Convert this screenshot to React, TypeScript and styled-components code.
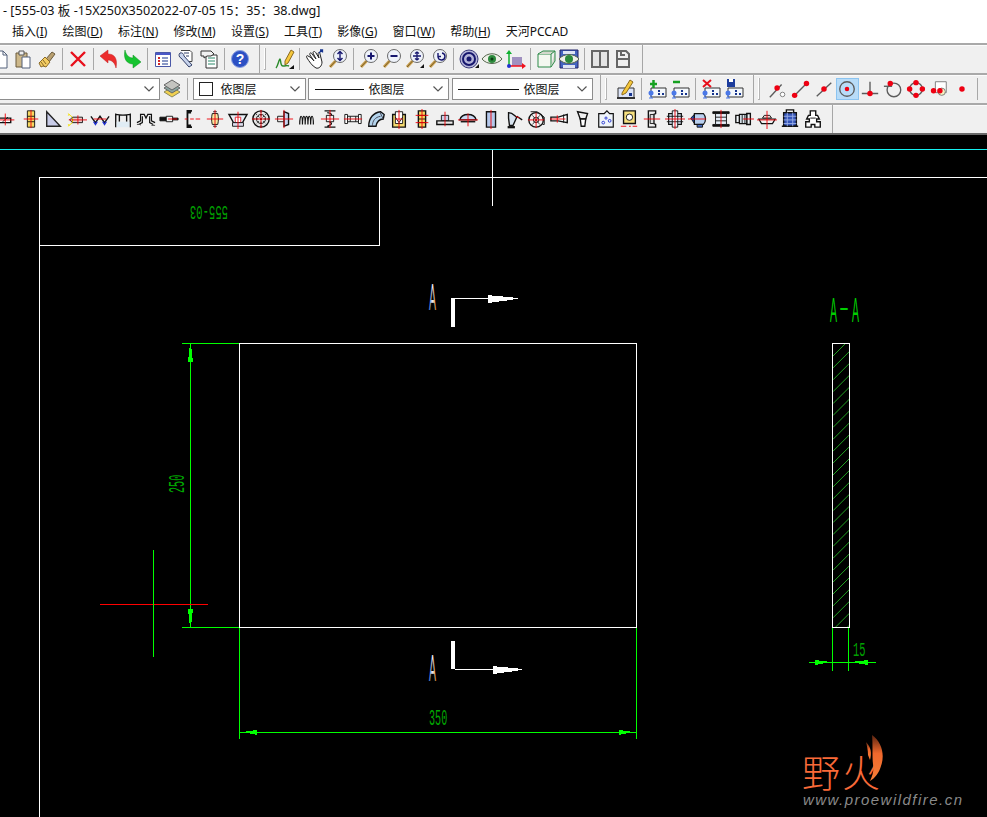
import React from "react";
import styled, { createGlobalStyle } from "styled-components";

const GlobalStyle = createGlobalStyle`
    html, body {
        margin: 0;
        padding: 0;
        width: 987px;
        height: 817px;
        overflow: hidden;
        background: #000;
        font-family: "Noto Sans", "Noto Sans CJK SC", sans-serif;
    }
`;

const Window = styled.div`
    width: 987px;
    height: 817px;
    display: flex;
    flex-direction: column;
    overflow: hidden;
`;

const TitleBar = styled.div`
    height: 22px;
    flex: none;
    background: #fff;
    color: #111;
    font-size: 12.6px;
    line-height: 22px;
    padding-left: 3px;
    white-space: nowrap;
`;

const MenuBar = styled.div`
    height: 21px;
    flex: none;
    background: #fff;
    display: flex;
    gap: 15.3px;
    padding-left: 12px;
    font-family: "Noto Sans", "Noto Sans CJK SC", sans-serif;
    font-size: 12px;
    line-height: 20px;
    color: #111;
    white-space: nowrap;
`;

const MenuKey = styled.span`
    text-decoration: underline;
`;

const ToolRow = styled.div`
    height: 30px;
    flex: none;
    box-sizing: border-box;
    background: #f0f0f0;
    border-top: 2px solid #a9a9a9;
    box-shadow: inset 0 1px 0 #fbfbfb;
    display: flex;
    align-items: center;
    overflow: hidden;
`;

const BottomEdge = styled.div`
    height: 2px;
    flex: none;
    background: #696969;
`;

const LeadSpace = styled.div<{ $offset: number }>`
    flex: none;
    margin-left: ${props => props.$offset}px;
`;

const ToolButton = styled.div<{ $active?: boolean }>`
    width: 23px;
    height: 22px;
    flex: none;
    box-sizing: border-box;
    display: flex;
    align-items: center;
    justify-content: center;
    background: ${props => props.$active ? "#b8dcf8" : "transparent"};
    outline: ${props => props.$active ? "1px solid #8cc4f0" : "none"};
    outline-offset: -1px;
`;

const SmallButton = styled(ToolButton)`
    svg {
        width: 20px;
        height: 20px;
    }
`;

const Separator = styled.div`
    width: 8px;
    height: 22px;
    flex: none;
    display: flex;
    justify-content: center;

    &::before {
        content: "";
        width: 1px;
        background: #a8a8a8;
    }
`;

const BandBreak = styled.div<{ $width: number; $grip?: boolean }>`
    width: ${props => props.$width}px;
    flex: none;
    align-self: stretch;
    box-sizing: border-box;
    padding-left: 7px;
    display: flex;
    align-items: center;
    gap: 4px;

    &::before {
        content: "";
        width: 1px;
        align-self: stretch;
        background: #a6a6a6;
    }

    &::after {
        content: "";
        display: ${props => props.$grip ? "block" : "none"};
        width: 1px;
        height: 21px;
        background: #fff;
        border-right: 1px solid #b4b4b4;
        border-bottom: 1px solid #b4b4b4;
    }
`;

const Combo = styled.div<{ $width: number; $gap?: number; $pad?: number }>`
    width: ${props => props.$width}px;
    height: 22px;
    flex: none;
    box-sizing: border-box;
    margin-left: ${props => props.$gap ?? 0}px;
    padding-left: ${props => props.$pad ?? 5}px;
    background: #fff;
    border: 1px solid #8d8d8d;
    display: flex;
    align-items: center;
    position: relative;
    font-size: 12px;
    color: #111;
    white-space: nowrap;
`;

const ComboArrow = styled.svg`
    position: absolute;
    right: 5px;
    top: 7px;
    width: 10px;
    height: 6px;
`;

const Swatch = styled.span`
    width: 14px;
    height: 14px;
    flex: none;
    box-sizing: border-box;
    background: #fff;
    border: 1px solid #222;
    margin-right: 8px;
`;

const LineSample = styled.span<{ $width: number }>`
    width: ${props => props.$width}px;
    height: 1px;
    flex: none;
    background: #111;
    margin-right: 5px;
`;

const Canvas = styled.svg`
    display: block;
    flex: none;
    width: 987px;
    height: 682px;
    background: #000;
`;

const CadText = styled.text<{ $tone?: string }>`
    font-family: "Liberation Mono", monospace;
    fill: ${props => props.$tone ?? "#00b400"};
`;

const LetterText = styled.text`
    font-family: "Liberation Sans", sans-serif;
`;

const BrandText = styled.text`
    font-family: "Noto Sans CJK SC", sans-serif;
    font-weight: 300;
    fill: #f96a38;
    font-size: 38px;
`;

const SiteText = styled.text`
    font-family: "Liberation Sans", sans-serif;
    font-style: italic;
    font-size: 15px;
    letter-spacing: 1.47px;
    fill: #8a8a8a;
`;

const Glyph = styled.svg`
    width: 22px;
    height: 22px;
    display: block;
    overflow: visible;
`;

function Ico({ children }: { children: React.ReactNode }) {
    return <Glyph viewBox="0 0 22 22" fill="none" stroke="#111" strokeWidth="1">{children}</Glyph>;
}

// red centre lines, used all over the part icons
const Red = ({ d }: { d: string }) => <path d={d} stroke="#f00008" strokeWidth="1" fill="none" />;
const Dot = ({ x, y, r = 3 }: { x: number; y: number; r?: number }) => <circle cx={x} cy={y} r={r} fill="#ee0012" stroke="none" />;
const Gray = ({ d }: { d: string }) => <path d={d} stroke="#5c5c5c" strokeWidth="1.5" fill="none" />;

function Lens({ mark, corner }: { mark: React.ReactNode; corner?: boolean }) {
    return (
        <Ico>
            <path d="M8.5 13 3 19" stroke="#caa050" strokeWidth="3" />
            <path d="M8.5 13 3 19" stroke="#7a6028" strokeWidth="1" />
            <circle cx="13" cy="8" r="6.5" fill="#eef2fa" stroke="#6a6a6a" />
            <g stroke="#16166e" strokeWidth="2">{mark}</g>
            {corner && <path d="M16 20h4v-4z" fill="#111" stroke="none" />}
        </Ico>
    );
}

function NodeBox({ top }: { top: React.ReactNode }) {
    return (
        <Ico>
            <path d="M5 10h15v9H5z" fill="#f4f8fc" stroke="#333" />
            <circle cx="5" cy="15" r="2.5" fill="#4a78e8" stroke="none" />
            <path d="M5 17v3M3 20h4" stroke="#4a78e8" />
            <path d="M12 15h2v2h-2zM16 15h2v2h-2zM12 12h2v2h-2z" fill="#16348e" stroke="none" />
            {top}
        </Ico>
    );
}

const topRow: Record<string, React.ReactNode> = {
    doc: <Ico><path d="M5 3h8l4 4v13H5z" fill="#fff" stroke="#52607a" /><path d="M13 3v4h4" stroke="#52607a" /></Ico>,
    paste: <Ico><path d="M3 5h11v14H3z" fill="#cdb88a" stroke="#6a5a3c" /><path d="M6 3h5v4H6z" fill="#eee" stroke="#555" /><path d="M9 9h8v11H9z" fill="#fff" stroke="#52607a" /></Ico>,
    brush: <Ico><path d="M10 11 16 4l3 2-6 8z" fill="#b9a070" stroke="#6a5a3c" /><path d="M3 15 9 9l5 5-4 5-3-1-2 1z" fill="#f3cc62" stroke="#8a6a28" /><path d="M7 12l3 4M5 14l3 4" stroke="#8a6a28" /></Ico>,
    cross: <Ico><path d="M4 4 18 18M18 4 4 18" stroke="#e8101c" strokeWidth="2.4" /></Ico>,
    undo: <Ico><path d="M2 8 10 2v4c6 0 10 4 8 14-1-5-4-8-8-8v3z" fill="#ec2c2c" stroke="#c02020" strokeWidth=".5" /></Ico>,
    redo: <Ico><path d="M20 14 12 20v-4C6 16 2 11 4 2c1 5 4 8 8 8V7z" fill="#16c430" stroke="#109020" strokeWidth=".5" /></Ico>,
    list: <Ico><path d="M3.5 4.5h15v14h-15z" fill="#fff" stroke="#4a58a8" /><path d="M4 5h14v2H4z" fill="#4a58c8" stroke="none" /><path d="M6 9h2v2H6zM6 12h2v2H6zM6 15h2v2H6z" fill="#d02828" stroke="none" /><path d="M10 10h6M10 13h6M10 16h6" stroke="#16348e" /></Ico>,
    wrench: <Ico><path d="M6 2.5h9l2 2v9h-4" stroke="#444" fill="#fff" /><path d="M5 5a3 3 0 0 0 1 5l8 9 3-2-8-9a3 3 0 0 0-4-3z" fill="#c8d4ec" stroke="#33406a" /><path d="M9 5h5M11 8h3" stroke="#33406a" /></Ico>,
    sheet: <Ico><path d="M8 7h11v13H8z" fill="#fff" stroke="#333" /><path d="M10 10h7M10 13h7M10 16h7" stroke="#2d8a6a" /><path d="M3 3h10l3 3-3 2H9l-3 2V8H3z" fill="#f2f2f2" stroke="#333" /></Ico>,
    pen: <Ico><path d="M12 13 18 2l3 2-6 11-3 2z" fill="#f6c83c" stroke="#8a6a20" /><path d="M3 20c2-2 3-9 4-9s0 7 3 7 4-1 6 0" stroke="#2a8a2a" strokeWidth="1.4" /><path d="M16 21h5v-4z" fill="#111" stroke="none" /></Ico>,
    hand: <Ico><path d="M4 8c3 1 5 4 6 5l-4-6c-1-2 1-3 2-1l4 5-3-6c0-2 2-2 3 0l3 5-1-4c0-2 2-2 2 0l2 8c0 4-3 7-6 6-4-2-7-7-9-10-1-2 0-3 1-2z" fill="#fff" stroke="#222" /><path d="M15 5l3-3M16 2h2.500v2.500" stroke="#16348e" strokeWidth="1.3" /></Ico>,
    zoomUpDown: <Lens mark={<path d="M13 3.500v9M10.500 6 13 3.500 15.500 6M10.500 10 13 12.500 15.500 10" strokeWidth="1.4" />} />,
    zoomIn: <Lens mark={<path d="M9.500 8h7M13 4.500v7" />} />,
    zoomOut: <Lens mark={<path d="M9.500 8h7" />} />,
    zoomPan: <Lens corner mark={<path d="M9 8h8M13 4v8M11 5.500 13 4l2 1.500M11 10.500 13 12l2-1.500" strokeWidth="1.3" />} />,
    zoomBack: <Lens mark={<path d="M15 5a3.500 3.500 0 1 1-4 4M11 5v3.500h3" strokeWidth="1.4" />} />,
    orbit: <Ico><circle cx="11" cy="11" r="9" fill="#b4b4d8" stroke="#3a3a7a" /><circle cx="11" cy="11" r="6" stroke="#16166e" strokeWidth="2" /><circle cx="11" cy="11" r="2.500" fill="#16166e" stroke="none" /><path d="M17 20h4v-4z" fill="#111" stroke="none" /></Ico>,
    eye: <Ico><path d="M1 11c5-7 15-7 20 0-5 6-15 6-20 0z" fill="#eef0e8" stroke="#55664c" /><circle cx="11" cy="11" r="4" fill="#2c8a3c" stroke="none" /><circle cx="11" cy="11" r="1.500" fill="#0c3a14" stroke="none" /></Ico>,
    axis: <Ico><path d="M8 9h10v9H8z" fill="#a090c0" stroke="none" /><path d="M5 18V4" stroke="#10b030" strokeWidth="1.5" /><path d="M2 6l3-4 3 4z" fill="#10b030" stroke="none" /><path d="M5 18h14" stroke="#f0101c" strokeWidth="1.5" /><path d="M18 15l4 3-4 3z" fill="#f0101c" stroke="none" /><circle cx="5" cy="18" r="2" fill="#2030d0" stroke="none" /></Ico>,
    cube: <Ico><path d="M3 6h13v13H3z" fill="#f4f8f0" stroke="#2c8a48" /><path d="M3 6l5-3h12l-4 3M16 19l4-6V3" stroke="#2c8a48" fill="#d4d8cc" /></Ico>,
    eyeFrame: <Ico><path d="M2 2h18v18H2z" fill="#4464c0" stroke="#222266" /><path d="M5 3h12v3H5zM5 17h12v3H5z" fill="#dde4f4" stroke="none" /><path d="M1 11c5-6 15-6 20 0-5 6-15 6-20 0z" fill="#eef0e8" stroke="#55664c" /><circle cx="11" cy="11" r="4" fill="#2c8a3c" stroke="none" /></Ico>,
    panes: <Ico><path d="M3 3h16v16H3z" fill="#e4e4e4" stroke="#666" strokeWidth="2" /><path d="M11 3v16" stroke="#666" strokeWidth="2" /></Ico>,
    panesB: <Ico><path d="M5 3h9l3 3v13H5z" fill="#f0f0f0" stroke="#666" strokeWidth="2" /><path d="M5 11h12M9 3v4h4" stroke="#666" strokeWidth="2" /></Ico>,
};

const secondRow: Record<string, React.ReactNode> = {
    layers: <Ico><path d="M3 14 11 19l8-5-8-5z" fill="#f0d050" stroke="#8a8a60" /><path d="M3 10 11 15l8-5-8-5z" fill="#8aa4a0" stroke="#666" /><path d="M3 7 11 12l8-5-8-5z" fill="#c4c4c0" stroke="#666" /></Ico>,
    layerEdit: <Ico><path d="M3 10h16v10H3z" fill="#dce4f8" stroke="#333" /><path d="M2 20h18" stroke="#333" strokeWidth="2" /><path d="M7 15 15 2l3 2-7 11-4 2z" fill="#f6c83c" stroke="#8a6a20" /><path d="M14 15h3v3h-3z" fill="#16348e" stroke="none" /></Ico>,
    addLayer: <NodeBox top={<path d="M4 6h7M7.500 2v8" stroke="#16a020" strokeWidth="2.500" />} />,
    minusLayer: <NodeBox top={<path d="M4 4h7" stroke="#16a020" strokeWidth="2.500" />} />,
    delLayer: <NodeBox top={<path d="M3 2l8 7M11 2 3 9" stroke="#e8101c" strokeWidth="2" />} />,
    saveLayer: <NodeBox top={<g stroke="none"><path d="M4 1h8v8H4z" fill="#1c3c9c" /><path d="M6 1h4v3H6z" fill="#fff" /></g>} />,
    snapEnd: <Ico><Gray d="M2 20 15 6" /><circle cx="16" cy="17" r="2.500" fill="#fff" stroke="#777" /><Dot x={10} y={10} /></Ico>,
    snapEnds: <Ico><Gray d="M5 17 17 5" /><Dot x={4} y={18} /><Dot x={17} y={5} /></Ico>,
    snapMid: <Ico><Gray d="M3 19 19 4" /><Dot x={11} y={11} /></Ico>,
    snapCenter: <Ico><circle cx="11" cy="11" r="8" stroke="#5c5c5c" strokeWidth="1.5" /><Dot x={11} y={11} r={2.5} /></Ico>,
    snapPerp: <Ico><Gray d="M11 3v13M2 16h18" /><Dot x={11} y={16} /></Ico>,
    snapTan: <Ico><circle cx="12" cy="12" r="7.500" stroke="#5c5c5c" strokeWidth="1.5" /><Gray d="M1 8h9" /><Dot x={8} y={5} /></Ico>,
    snapQuad: <Ico><circle cx="11" cy="11" r="7" stroke="#5c5c5c" strokeWidth="1.5" /><Dot x={11} y={4} /><Dot x={11} y={18} /><Dot x={4} y={11} /><Dot x={18} y={11} /></Ico>,
    snapIns: <Ico><path d="M7 3h12v12H7z" fill="#fff" stroke="#777" /><circle cx="14" cy="14" r="4" fill="#f4f0c0" stroke="#777" /><Dot x={5} y={13} /><Dot x={12} y={13} /></Ico>,
    snapNode: <Ico><Dot x={11} y={11} /></Ico>,
};

const partIcons: React.ReactNode[] = [
    <Ico key="0"><path d="M-2 10h16v5H-2z" fill="#fff" strokeWidth="1.500" /><path d="M5 14 11 9" /><Red d="M-2 12h20M8 5v13" /></Ico>,
    <Ico key="1"><path d="M7 2h8v18H7z" fill="#f6d860" /><path d="M7 8h8M7 14h8" /><Red d="M3 11h16M11 1v20" /></Ico>,
    <Ico key="2"><path d="M3 3v16h15z" fill="#c8cce8" stroke="#222" strokeWidth="1.500" /></Ico>,
    <Ico key="3"><path d="M6 9h11v6H6z" fill="#e8c8c8" /><path d="M1 5l5 4v6l-5 4M3 6l-2 1M3 18l-2-1" stroke="#f4e000" /><path d="M6 9l-3 3 3 3" /><Red d="M2 12h20M12 7v10" /></Ico>,
    <Ico key="4"><path d="M1 8l5 7 5-7 5 7 5-7" strokeWidth="1.500" /><path d="M4 14l2 3 2-3M14 14l2 3 2-3" stroke="#2030d0" strokeWidth="1.500" /><Red d="M4 11h14" /></Ico>,
    <Ico key="5"><path d="M3 5v15M19 5v15M3 6c5 1 11 1 16 0M7 6v8M15 6v8" strokeWidth="1.500" /><path d="M4 14h14v6H4z" fill="#e0ecf4" stroke="none" /></Ico>,
    <Ico key="6"><path d="M1 15l4-2V6h4l2 4 2-4h4v7l4 2M3 17l4-2V8M19 17l-4-2V8" strokeWidth="1.300" /><path d="M1 17h4v1M17 18h4" stroke="#444" /></Ico>,
    <Ico key="7"><path d="M1 9h7v4H1z" fill="#111" /><path d="M8 8h7v6H8z" fill="#f0f0f0" /><path d="M15 10h6v2h-6z" fill="#111" /><Red d="M10 11h10" /></Ico>,
    <Ico key="8"><path d="M11 2H6v18h5M6 4h4M6 18h4" strokeWidth="2" /><Red d="M3 11h3M9 11h4M15 11h5" /></Ico>,
    <Ico key="9"><path d="M8 5c-1 4-1 8 0 12h6c1-4 1-8 0-12z" fill="#f6e8a0" /><path d="M9 3h4M9 19h4" /><Red d="M2 11h18M11 1v20" /></Ico>,
    <Ico key="10"><path d="M1 6h20l-5 9H6z" fill="#e8f0f8" strokeWidth="1.500" /><path d="M8 9h6v6H8z" fill="#fff" stroke="#e0202c" /><path d="M5 15h12v4H5z" fill="#dde" /><Red d="M11 3v19" /></Ico>,
    <Ico key="11"><circle cx="11" cy="11" r="9" fill="#e4e4e4" strokeWidth="1.500" /><circle cx="11" cy="11" r="5" /><path d="M11 2v18M2 11h18M5 5l12 12M17 5 5 17" strokeDasharray="2 2" /><Red d="M1 11h20M11 1v20" /></Ico>,
    <Ico key="12"><path d="M4 8h8v6H4z" fill="#f0f0f0" /><path d="M11 3l5 2v12l-5 2z" fill="#c8d4f0" strokeWidth="1.500" /><Red d="M1 11h20M11 1v20" /></Ico>,
    <Ico key="13"><path d="M3 17c0-12 3-12 3 0 0-12 3-12 3 0 0-12 3-12 3 0 0-12 3-12 3 0 0-12 3-12 3 0" strokeWidth="1.300" /></Ico>,
    <Ico key="14"><path d="M5 2h12M8 4c6 1 6 3 0 5M8 13c6 2 6 4 0 6M5 20h12" strokeWidth="1.500" /><path d="M7 7h8v7H7z" fill="#eee" /><Red d="M1 11h20M11 1v20" /></Ico>,
    <Ico key="15"><path d="M2 6h3v10H2zM17 6h3v10h-3z" fill="#fff" /><path d="M5 8h12v6H5z" fill="#f0f0f0" /><path d="M8 8v6M14 8v6" /><Red d="M1 11h20" /></Ico>,
    <Ico key="16"><path d="M3 19c0-9 5-15 13-16l4 3-1 5c-5 0-7 3-8 8z" fill="#b4d4ec" strokeWidth="1.500" /><path d="M7 19c0-6 3-10 9-11M15 3l4 8" stroke="#445" /></Ico>,
    <Ico key="17"><path d="M4 6h14v14H4z" fill="#f6dc70" strokeWidth="1.500" /><path d="M7 3h8v13H7z" fill="#fff" /><path d="M7 9l4 6 4-6" /><Red d="M11 1v21M7 11h8" /></Ico>,
    <Ico key="18"><path d="M7 2h8v18H7z" fill="#f6d860" strokeWidth="1.500" /><path d="M7 7h8M7 11h8M7 15h8" /><Red d="M11 0v22M4 7h14M4 15h14" /></Ico>,
    <Ico key="19"><path d="M7 7h8v6H7z" fill="#c8d0e8" /><path d="M2 13h18v4H2z" fill="#e8e8e8" strokeWidth="1.500" /><Red d="M11 3v16" /></Ico>,
    <Ico key="20"><path d="M2 12c2-8 16-8 18 0z" fill="#c8d8f0" strokeWidth="1.500" /><path d="M3 14h16" strokeWidth="1.500" /><Red d="M0 12h22M11 5v14" /></Ico>,
    <Ico key="21"><path d="M6 3h10v17H6z" fill="#b4c8ec" strokeWidth="1.500" /><Red d="M11 1v21" /></Ico>,
    <Ico key="22"><path d="M5 4c5 0 6 3 9 5l-4 9H6l-1-8z" fill="#d8e4f0" strokeWidth="1.500" /><path d="M4 20h8" strokeWidth="2.500" /><path d="M14 8l6 4" strokeWidth="1.500" /><Red d="M13 8l4 2" /></Ico>,
    <Ico key="23"><circle cx="10" cy="12" r="8" fill="#f2f2f2" strokeWidth="1.500" /><circle cx="10" cy="12" r="3" /><path d="M4 3h7l8 6v8h-2" /><path d="M6 7l8 10M14 7 6 17" stroke="#333" /><Red d="M1 12h18M10 4v17" /></Ico>,
    <Ico key="24"><path d="M1 9h8l10-3v9L9 13H1z" fill="#fff" strokeWidth="1.500" /><path d="M15 6v9" /><Red d="M0 11h17M8 7v8" /></Ico>,
    <Ico key="25"><path d="M5 3l11 2-2 6H8z" fill="#f2f2f2" strokeWidth="1.500" /><path d="M8 11h6l-1 8H9z" fill="#fff" strokeWidth="1.500" /></Ico>,
    <Ico key="26"><path d="M3 5h6l3-3 3 3h4v15H3z" fill="#eef4fa" strokeWidth="1.300" /><circle cx="8" cy="15" r="1.500" stroke="#2030d0" /><circle cx="15" cy="13" r="1.500" stroke="#2030d0" /><circle cx="11" cy="10" r="1.200" stroke="#2030d0" /></Ico>,
    <Ico key="27"><path d="M5 2h13v14H5z" fill="#f6e080" strokeWidth="1.500" /><circle cx="11.500" cy="9" r="3.500" fill="#fff" /><Red d="M2 19h6M11 19h2M15 19h5" /></Ico>,
    <Ico key="28"><path d="M7 2h8v3l-2 1v10l2 1v3H7z" fill="#f0f0f0" strokeWidth="1.500" /><path d="M9 6h4v10H9z" fill="#ddd" /><Red d="M2 11h18" /></Ico>,
    <Ico key="29"><path d="M4 5h14v12H4z" fill="#dce8f8" strokeWidth="1.300" /><path d="M8 2h6v18H8z" fill="#eef4fc" /><path d="M2 8h18M2 14h18" /><Red d="M0 11h22M11 0v22" /></Ico>,
    <Ico key="30"><path d="M3 10l4-4v10z" fill="#2050c0" /><path d="M7 5h10c3 3 3 9 0 12H7z" fill="#b8d0f0" strokeWidth="1.300" /><path d="M10 17h6v3h-6z" fill="#4870c8" /><Red d="M0 11h20" /></Ico>,
    <Ico key="31"><path d="M2 3h18v2H2zM2 17h18v2H2z" fill="#111" /><path d="M5 5h12v12H5z" fill="#e4eef8" /><path d="M5 9h12M5 13h12" /><Red d="M11 1v20" /></Ico>,
    <Ico key="32"><path d="M2 7h4v8H2zM14 5h4v12h-4z" fill="#f0f4f8" strokeWidth="1.500" /><path d="M6 6h8v10H6z" fill="#dce8f0" strokeWidth="1.300" /><path d="M9 6v10M12 6v10" /><Red d="M10 11h12" /></Ico>,
    <Ico key="33"><path d="M8 7h6l2 3H6z" fill="#f4d0d0" /><path d="M2 11h18l-3 5H5z" fill="#f0f0f0" strokeWidth="1.300" /><Red d="M0 12h22M11 2v20" /></Ico>,
    <Ico key="34"><path d="M4 4h14v15H4z" fill="#3454b8" strokeWidth="1.500" /><path d="M2 19h7M13 19h7M7 1h8v3H7z" strokeWidth="1.500" /><path d="M4 8h14M4 12h14M4 16h14M8 4v15M14 4v15" stroke="#9ab0e8" /></Ico>,
    <Ico key="35"><path d="M8 2h6v5h2l2 4h-3v3h4v6h-6v-3H9v3H3v-6h4v-3H4l2-4h2z" fill="#fff" strokeWidth="1.500" /><path d="M8 10h6" /></Ico>,
];

const menuItems: [string, string][] = [
    ["插入", "I"], ["绘图", "D"], ["标注", "N"], ["修改", "M"], ["设置", "S"],
    ["工具", "T"], ["影像", "G"], ["窗口", "W"], ["帮助", "H"],
];

const Arrow = ({ points }: { points: string }) => <polygon points={points} fill="#00ff00" />;

function Chevron() {
    return (
        <ComboArrow viewBox="0 0 10 6" fill="none" stroke="#555" strokeWidth="1.200">
            <path d="M.5.5 5 5 9.500.5" />
        </ComboArrow>
    );
}

function btns(group: Record<string, React.ReactNode>, names: string[]) {
    return names.map(n => <ToolButton key={n}>{group[n]}</ToolButton>);
}

function snapBtns(names: string[]) {
    return names.map(n => <SmallButton key={n}>{secondRow[n]}</SmallButton>);
}

function Drawing() {
    const hatch = Array.from({ length: 25 }, (_, i) => 356 + i * 11.9);
    return (
        <Canvas viewBox="0 135 987 682" shapeRendering="crispEdges">
            <defs>
                <linearGradient id="letterTone" x1="0" x2="1" y1="0" y2="0">
                    <stop offset="0" stopColor="#3a7ae8" />
                    <stop offset=".5" stopColor="#e8e8e8" />
                    <stop offset="1" stopColor="#e88a1c" />
                </linearGradient>
                <linearGradient id="flameTone" x1="0" x2="0" y1="0" y2="1">
                    <stop offset="0" stopColor="#5a2410" />
                    <stop offset=".4" stopColor="#f0682c" />
                    <stop offset="1" stopColor="#f98038" />
                </linearGradient>
                <clipPath id="sectionClip"><rect x="833" y="344" width="16" height="283" /></clipPath>
            </defs>

            <path d="M0 149.500H987" stroke="#16f0f0" />
            <path d="M492.500 150V206" stroke="#fff" />

            <path d="M39.500 817V177.500H987M39.500 245.500H379.500V177.500" stroke="#fff" fill="none" />
            <CadText transform="translate(228 206) rotate(180) scale(.53 .98)" fontSize="20" $tone="#00a000">555-03</CadText>

            <path d="M239.500 343.500H636.500V627.500H239.500Z" stroke="#fff" fill="none" />
            <path d="M182 343.500H239M182 627.500H239M190.500 343V627" stroke="#00ff00" />
            <path d="M239.500 628V739M636.500 628V739M239 732.500H636" stroke="#00ff00" />
            <Arrow points="190,344 191,344 193,362 188,362" />
            <Arrow points="190,627 191,627 193,609 188,609" />
            <Arrow points="243,732 257,730 257,735" />
            <Arrow points="633,732 619,730 619,735" />
            <CadText transform="translate(184 493) rotate(-90) scale(.46 1)" fontSize="22" $tone="#00a800">250</CadText>
            <CadText transform="translate(429 725) scale(.46 1)" fontSize="22" $tone="#00a800">350</CadText>

            <path d="M100 604.500H208" stroke="#f00" />
            <path d="M153.500 550V657" stroke="#00ff00" />

            <LetterText transform="translate(429 310) scale(.42 1.45)" fontSize="25" fill="url(#letterTone)">A</LetterText>
            <path d="M451 298H455V327H451Z" fill="#fff" />
            <path d="M455 298.500H518" stroke="#fff" />
            <polygon points="488,295 492,295 492,296 503,296 503,297 513,297 513,300 507,300 507,301 499,301 499,302 492,302 492,303 488,303" fill="#fff" />
            <LetterText transform="translate(429 681) scale(.42 1.45)" fontSize="25" fill="url(#letterTone)">A</LetterText>
            <path d="M451 641H455V669H451Z" fill="#fff" />
            <path d="M455 669.500H522" stroke="#fff" />
            <polygon points="493,666 497,666 497,667 508,667 508,668 518,668 518,671 512,671 512,672 504,672 504,673 497,673 497,674 493,674" fill="#fff" />

            <g shapeRendering="auto" fill="#00d000">
                <LetterText transform="translate(830 322) scale(.42 1.4)" fontSize="25">A</LetterText>
                <LetterText transform="translate(839 321) scale(1.2 1)" fontSize="25" y="-5">-</LetterText>
                <LetterText transform="translate(852 322) scale(.42 1.4)" fontSize="25">A</LetterText>
            </g>

            <g clipPath="url(#sectionClip)" shapeRendering="auto">
                {hatch.map(y => <line key={y} x1="833" y1={y} x2="851" y2={y - 18} stroke="#2ee82e" strokeWidth=".7" />)}
            </g>
            <path d="M832.500 343.500H849.500V627.500H832.500Z" stroke="#fff" fill="none" />
            <path d="M832.500 628V671M848.500 628V671M809 662.500H876" stroke="#00ff00" />
            <Arrow points="831,662 815,660 815,665" />
            <Arrow points="851,662 868,660 868,665" />
            <CadText transform="translate(853 656) scale(.52 1)" fontSize="20" $tone="#00a000">15</CadText>

            <g shapeRendering="auto">
                <BrandText x="802" y="787">野</BrandText>
                <BrandText x="842" y="787">火</BrandText>
                <path d="M872 735c10 7 13 20 9 31-2 7-6 12-11 15 3-6 4-11 3-17-1-8 0-20-1-29z" fill="url(#flameTone)" />
                <path d="M866 742c5 5 6 11 4 18l-2-5c0-5-1-9-2-13z" fill="url(#flameTone)" />
                <SiteText x="803" y="805">www.proewildfire.cn</SiteText>
            </g>
        </Canvas>
    );
}

function App() {
    return (
        <Window>
            <GlobalStyle />
            <TitleBar>- [555-03 板 -15X250X3502022-07-05 15：35：38.dwg]</TitleBar>
            <MenuBar>
                {menuItems.map(([label, key]) => (
                    <span key={key}>{label}(<MenuKey>{key}</MenuKey>)</span>
                ))}
                <span>天河PCCAD</span>
            </MenuBar>

            <ToolRow>
                <LeadSpace $offset={-10.5} />
                {btns(topRow, ["doc", "paste", "brush"])}
                <Separator />
                {btns(topRow, ["cross"])}
                <Separator />
                {btns(topRow, ["undo", "redo"])}
                <Separator />
                {btns(topRow, ["list", "wrench", "sheet"])}
                <Separator />
                <ToolButton>
                    <Ico>
                        <circle cx="11" cy="11" r="8.500" fill="#2c50c4" stroke="#8aa0e0" />
                        <text x="11" y="16" textAnchor="middle" fontSize="14" fontWeight="700" fontFamily="Liberation Sans, sans-serif" fill="#fff" stroke="none">?</text>
                    </Ico>
                </ToolButton>
                <BandBreak $width={21} $grip />
                {btns(topRow, ["pen"])}
                <Separator />
                {btns(topRow, ["hand", "zoomUpDown"])}
                <Separator />
                {btns(topRow, ["zoomIn", "zoomOut", "zoomPan", "zoomBack"])}
                <Separator />
                {btns(topRow, ["orbit", "eye", "axis"])}
                <Separator />
                {btns(topRow, ["cube", "eyeFrame"])}
                <Separator />
                {btns(topRow, ["panes", "panesB"])}
                <BandBreak $width={9} />
            </ToolRow>

            <ToolRow>
                <Combo $width={162} $gap={-2}><Chevron /></Combo>
                {btns(secondRow, ["layers"])}
                <Separator />
                <Combo $width={113} $gap={1.5}><Swatch />依图层<Chevron /></Combo>
                <Combo $width={141} $gap={2} $pad={6}><LineSample $width={49} />依图层<Chevron /></Combo>
                <Combo $width={141} $gap={3}><LineSample $width={61} />依图层<Chevron /></Combo>
                <BandBreak $width={22} $grip />
                {btns(secondRow, ["layerEdit"])}
                <Separator />
                {btns(secondRow, ["addLayer", "minusLayer"])}
                <Separator />
                {btns(secondRow, ["delLayer", "saveLayer"])}
                <BandBreak $width={21} $grip />
                {snapBtns(["snapEnd", "snapEnds", "snapMid"])}
                <SmallButton $active>{secondRow.snapCenter}</SmallButton>
                {snapBtns(["snapPerp", "snapTan", "snapQuad", "snapIns", "snapNode"])}
                <Separator />
            </ToolRow>

            <ToolRow>
                <LeadSpace $offset={-3.5} />
                {partIcons.map((icon, i) => <SmallButton key={i}>{icon}</SmallButton>)}
                <BandBreak $width={9} />
            </ToolRow>
            <BottomEdge />

            <Drawing />
        </Window>
    );
}

export default App;
